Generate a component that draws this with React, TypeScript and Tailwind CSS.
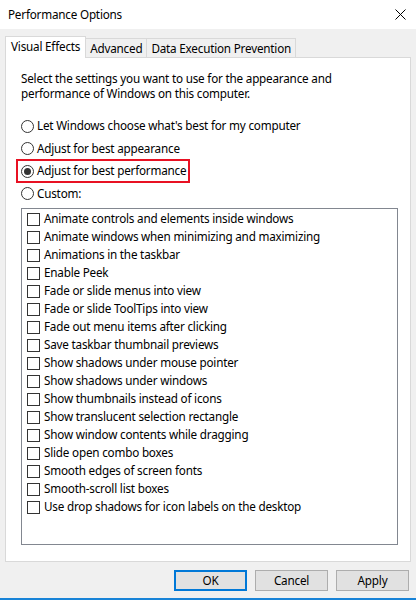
import React from "react";

const items = [
  "Animate controls and elements inside windows",
  "Animate windows when minimizing and maximizing",
  "Animations in the taskbar",
  "Enable Peek",
  "Fade or slide menus into view",
  "Fade or slide ToolTips into view",
  "Fade out menu items after clicking",
  "Save taskbar thumbnail previews",
  "Show shadows under mouse pointer",
  "Show shadows under windows",
  "Show thumbnails instead of icons",
  "Show translucent selection rectangle",
  "Show window contents while dragging",
  "Slide open combo boxes",
  "Smooth edges of screen fonts",
  "Smooth-scroll list boxes",
  "Use drop shadows for icon labels on the desktop",
];

function Radio({ checked }: { checked?: boolean }) {
  return (
    <span className="w-[13px] h-[13px] rounded-full border border-[#333333] bg-white flex items-center justify-center shrink-0">
      {checked && <span className="w-[7px] h-[7px] rounded-full bg-[#333333]" />}
    </span>
  );
}

function RadioRow({ label, checked, highlight }: { label: string; checked?: boolean; highlight?: boolean }) {
  return (
    <div className="relative h-[22.5px] flex items-center gap-[3px]">
      <Radio checked={checked} />
      <span>{label}</span>
      {highlight && (
        <div className="absolute left-[-5px] top-[-1px] w-[174px] h-[24px] border-2 border-[#e81123] pointer-events-none" />
      )}
    </div>
  );
}

export default function App() {
  return (
    <div
      className="w-[416px] h-[600px] bg-[#f0f0f0] flex flex-col text-[11.7px] tracking-[-0.2px] text-black border-b-2 border-[#1883d7] overflow-hidden"
      style={{ fontFamily: '"Noto Sans", "Liberation Sans", sans-serif' }}
    >
      <div className="h-[29px] bg-white flex items-center justify-between pl-[8px] pr-[10px] shrink-0">
        <span className="leading-none">Performance Options</span>
        <svg width="11" height="11" viewBox="0 0 11 11" className="block">
          <path d="M0.5 0.5 L10.5 10.5 M10.5 0.5 L0.5 10.5" stroke="#000" strokeWidth="1" />
        </svg>
      </div>
      <div className="px-[5px] pt-[7px] flex flex-col">
        <div className="flex items-end h-[21px] relative z-10">
          <div className="shrink-0 h-[22px] -mb-px bg-white border border-b-0 border-[#d9d9d9] px-[5px] flex items-start pt-[1px] leading-[16px] whitespace-nowrap">
            Visual Effects
          </div>
          <div className="shrink-0 h-[19px] bg-[#f0f0f0] border border-l-0 border-b-0 border-[#d9d9d9] px-[4px] flex items-center leading-[16px] whitespace-nowrap">
            Advanced
          </div>
          <div className="shrink-0 h-[19px] bg-[#f0f0f0] border border-l-0 border-b-0 border-[#d9d9d9] px-[4px] flex items-center leading-[16px] whitespace-nowrap">
            Data Execution Prevention
          </div>
        </div>
        <div className="h-[505px] bg-white border border-[#d9d9d9] pl-[15px] pr-[12px] pt-[13px] flex flex-col">
          <p className="leading-[15px] w-[320px]">
            Select the settings you want to use for the appearance and performance of Windows on this computer.
          </p>
          <div className="mt-[14px] flex flex-col">
            <RadioRow label="Let Windows choose what's best for my computer" />
            <RadioRow label="Adjust for best appearance" />
            <RadioRow label="Adjust for best performance" checked highlight />
            <RadioRow label="Custom:" />
          </div>
          <div className="mt-[3px] h-[337px] border border-[#828790] bg-white pl-[5px] pt-[1px] flex flex-col">
            {items.map((t) => (
              <div key={t} className="h-[18px] flex items-center gap-[4px] shrink-0">
                <span className="w-[13px] h-[13px] border border-[#333333] bg-white shrink-0" />
                <span className="whitespace-nowrap">{t}</span>
              </div>
            ))}
          </div>
        </div>
        <div className="flex justify-end gap-[8px] pt-[8px] pr-[2px]">
          <button className="w-[73px] h-[21px] bg-[#e1e1e1] border-2 border-[#0078d7] leading-none">OK</button>
          <button className="w-[73px] h-[21px] bg-[#e1e1e1] border border-[#adadad] leading-none">Cancel</button>
          <button className="w-[73px] h-[21px] bg-[#e1e1e1] border border-[#adadad] leading-none">Apply</button>
        </div>
      </div>
    </div>
  );
}
